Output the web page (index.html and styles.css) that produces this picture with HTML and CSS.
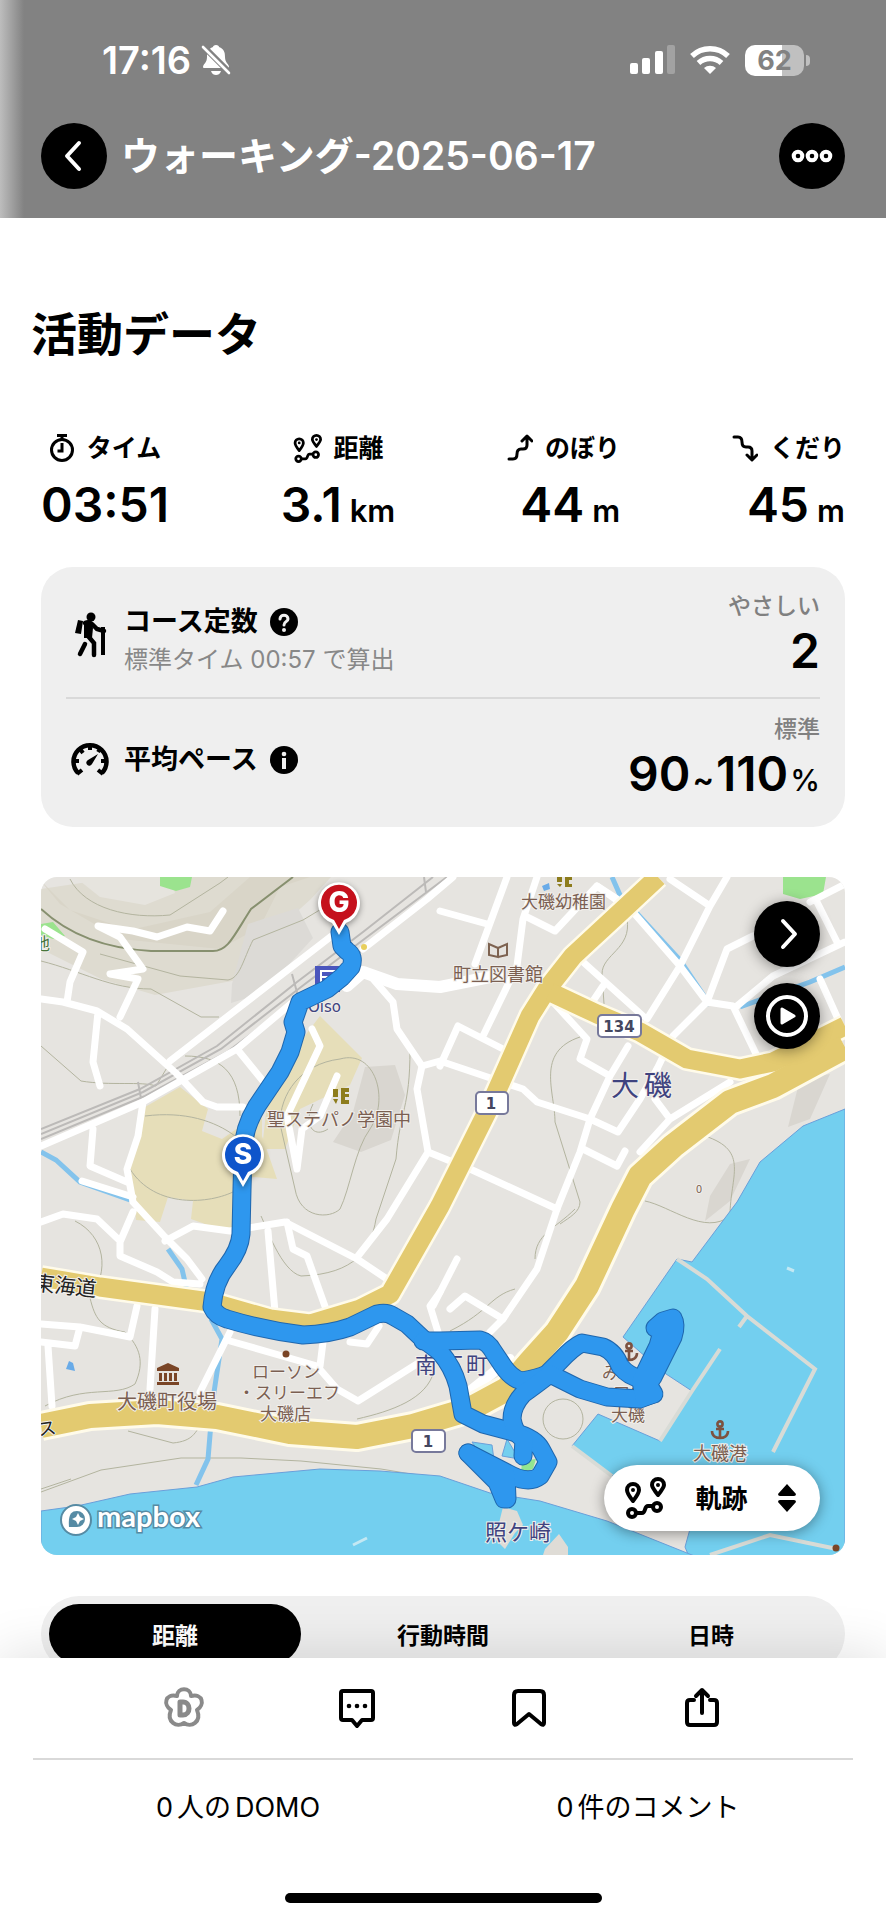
FILE: index.html
```html
<!DOCTYPE html>
<html lang="ja">
<head>
    <meta charset="UTF-8">
    <meta name="viewport" content="width=device-width, initial-scale=1.0">
    <title>ウォーキング-2025-06-17</title>
    <link rel="stylesheet" href="styles.css">
</head>
<body>

<!-- shared icons -->
<svg class="defs" aria-hidden="true">
    <symbol id="track" viewBox="0 0 42 42">
        <g fill="none" stroke="currentColor" stroke-width="4" stroke-linejoin="round">
            <path d="M9 24C5 19 3 16 3 13a6 6 0 0 1 12 0c0 3-2 6-6 11z"/>
            <path d="M34 18c-4-5-6-8-6-10a6 6 0 0 1 12 0c0 2-2 5-6 10z"/>
            <circle cx="8" cy="36" r="4"/>
            <circle cx="33" cy="30" r="4"/>
            <path d="M12 36h6c4 0 2-7 6-7h5"/>
        </g>
        <circle cx="9" cy="13" r="2"/>
        <circle cx="34" cy="8" r="2"/>
    </symbol>
    <symbol id="anchor" viewBox="0 0 20 20">
        <g fill="none" stroke="currentColor" stroke-width="2.6">
            <circle cx="10" cy="4" r="2.6"/>
            <path d="M10 7v11M6 9h8M2 11c0 5 4 7 8 7s8-2 8-7"/>
        </g>
    </symbol>
</svg>

<header class="header">
    <div class="status">
        <span class="clock">17:16</span>
        <svg width="30" height="32" viewBox="0 0 30 32" fill="#fff">
            <path d="M15 1c2 0 3 1 3 2 5 2 6 5 6 10 0 6 4 7 4 10 0 1-1 1-2 1H4c-1 0-2 0-2-1 0-3 4-4 4-10 0-5 1-8 6-10 0-1 1-2 3-2z"/>
            <path d="M10 27h10c-1 3-3 4-5 4s-4-1-5-4z"/>
            <path d="M1 1l29 29" stroke="#828282" stroke-width="6"/>
            <path d="M2 3l26 26" stroke="#fff" stroke-width="2.6" stroke-linecap="round"/>
        </svg>
        <svg class="signal" width="46" height="30" viewBox="0 0 46 30" fill="#fff">
            <rect x="1" y="18" width="8" height="11" rx="2"/>
            <rect x="13" y="13" width="8" height="16" rx="2"/>
            <rect x="26" y="6" width="8" height="23" rx="2"/>
            <rect x="38" y="0" width="8" height="29" rx="2" fill="#a2a2a2"/>
        </svg>
        <svg class="wifi" width="42" height="30" viewBox="0 0 42 30" fill="none" stroke="#fff" stroke-width="5.4">
            <path d="M3 11a26 26 0 0 1 36 0M9.500 18a17 17 0 0 1 23 0"/>
            <path d="M21 29l-6-6a9 9 0 0 1 12 0z" fill="#fff" stroke="none"/>
        </svg>
        <span class="battery">62</span>
    </div>
    <div class="titlebar">
        <button class="round" aria-label="戻る">
            <svg width="32" height="32" viewBox="0 0 32 32" fill="none" stroke="#fff" stroke-width="4" stroke-linecap="round" stroke-linejoin="round"><path d="M21 3L9 16l12 13"/></svg>
        </button>
        <h1>ウォーキング-2025-06-17</h1>
        <button class="round" aria-label="メニュー">
            <svg width="42" height="14" viewBox="0 0 42 14" fill="none" stroke="#fff" stroke-width="4"><circle cx="7" cy="7" r="4.300"/><circle cx="21" cy="7" r="4.300"/><circle cx="35" cy="7" r="4.300"/></svg>
        </button>
    </div>
</header>

<main>
    <h2>活動データ</h2>

    <div class="stats">
        <div class="stat">
            <div class="stat-label">
                <svg width="26" height="30" viewBox="0 0 26 30" fill="none" stroke="#000" stroke-width="3"><circle cx="13" cy="17" r="10.500"/><path d="M8 2.500h10M13 2v5M13 10v8H8.500"/></svg>
                タイム
            </div>
            <div class="value">03:51</div>
        </div>
        <div class="stat">
            <div class="stat-label">
                <svg width="29" height="29"><use href="#track"/></svg>
                距離
            </div>
            <div class="value">3.1<small>km</small></div>
        </div>
        <div class="stat right">
            <div class="stat-label">
                <svg width="26" height="28" viewBox="0 0 26 28" fill="none" stroke="#000" stroke-width="3" stroke-linecap="round" stroke-linejoin="round"><path d="M2 25h4q4 0 4-5t4-5h2q4 0 4-4V3M15 7l5-5 5 5"/></svg>
                のぼり
            </div>
            <div class="value">44<small>m</small></div>
        </div>
        <div class="stat right">
            <div class="stat-label">
                <svg width="26" height="28" viewBox="0 0 26 28" fill="none" stroke="#000" stroke-width="3" stroke-linecap="round" stroke-linejoin="round"><path d="M2 3h4q4 0 4 5t4 5h2q4 0 4 4v8M15 21l5 5 5-5"/></svg>
                くだり
            </div>
            <div class="value">45<small>m</small></div>
        </div>
    </div>

    <section class="card">
        <div class="row course">
            <svg width="48" height="48" viewBox="0 0 48 48">
                <circle cx="25" cy="7" r="4.500"/>
                <path d="M12 10l5 1-2 13-6-1z"/>
                <path d="M19 13q4-2 7 1l5 5 7 2" fill="none" stroke="#000" stroke-width="4.500" stroke-linecap="round"/>
                <path d="M18 13h7l2 5-1 10h-8z"/>
                <path d="M22 26l6 7v12M19 34l-5 10" fill="none" stroke="#000" stroke-width="4.500" stroke-linecap="round"/>
                <path d="M37 17v28" stroke="#000" stroke-width="4"/>
            </svg>
            <div class="row-text">
                <h3>コース定数
                    <svg width="28" height="28" viewBox="0 0 28 28"><circle cx="14" cy="14" r="14"/><path d="M10 11c0-5 8-5 8 0 0 3-4 2-4 6" fill="none" stroke="#efefef" stroke-width="3" stroke-linecap="round"/><circle cx="14" cy="22" r="2" fill="#efefef"/></svg>
                </h3>
                <p>標準タイム 00:57 で算出</p>
            </div>
            <div class="result">
                <span class="grade">やさしい</span>
                <span class="value">2</span>
            </div>
        </div>
        <div class="row pace">
            <svg width="48" height="48" viewBox="0 0 48 48">
                <path d="M12 37A16.500 16.500 0 1 1 36 37" fill="none" stroke="#000" stroke-width="4.500"/>
                <path d="M8 25h5M35 25h5M24 8v6M14 13l3 4M34 13l-2 3M11 38l5-4M37 38l-5-4" stroke="#000" stroke-width="4"/>
                <path d="M32 18L22 24a3 3 0 1 0 4 4z"/>
            </svg>
            <div class="row-text">
                <h3>平均ペース
                    <svg width="28" height="28" viewBox="0 0 28 28"><circle cx="14" cy="14" r="14"/><circle cx="14" cy="8" r="2.300" fill="#efefef"/><path d="M12 12h4v11h-4z" fill="#efefef"/></svg>
                </h3>
            </div>
            <div class="result">
                <span class="grade">標準</span>
                <span class="value">90<span class="tilde">~</span>110<small>%</small></span>
            </div>
        </div>
    </section>

    <section class="map">
        <svg class="map-view" viewBox="41 878 804 678" preserveAspectRatio="xMidYMid slice">
            <rect class="land" x="41" y="878" width="804" height="678"/>

            <!-- ground -->
            <path fill="#dedbd0" d="M41 890l80-12h210l-20 22-50 45-18 35-88 16-54-16-60-30z"/>
            <path fill="#d9d5c8" d="M60 905l60 35 100 10 40-22 20-40 30-10h-60l-40 35-80 18-60-20-30-30z"/>
            <path fill="#e6e4de" d="M75 878h95l5 16-30 12-45-8z"/>
            <path fill="#dcdad6" d="M232 985l16-60 50-16 15 30-50 55-32 10z"/>
            <path fill="#d9d6d0" d="M365 1068l30-2 10 30-14 45-30 12-28-10 20-30zM800 1080l30-5-20 45-22 8zM730 1165l20-5-20 42-25 20 5-25z"/>
            <path class="school" d="M145 1108l35-20 28 22-6 22 20 8 40-28v25l15 43-24-2-20 12v45l-42-15 2-18-25-4-8 25-24-2-6-55z"/>
            <path class="school" d="M320 1017l42 42-12 27-50 24-15 40h-23l5-45 20-45z"/>
            <path class="park" d="M160 878h32l-2 10-14 4-16-5zM783 878h43l-3 17-23 5-17-5zM41 925l12-2 12 14-12 3-12-4z"/>

            <!-- contour lines -->
            <g class="contour">
                <path d="M41 910c30 28 70 40 110 42h62c15 0 20-14 38-42l42-32" stroke="#87906f" stroke-width="2"/>
                <path d="M70 880c15 30 60 40 100 36l50-32 8-6M41 962c40 10 70 28 110 28l50 28h18M100 955l80 22 48 4c12-2 15-20 25-40l50-20 20-12M41 1047l40 35c30 5 60 0 75 5l15-25M185 1057c35 0 55 15 55 60"/>
                <path d="M145 1117c40-5 70 5 90 20M130 1170c25 40 80 35 105 22M340 1060c35-10 50 40 30 70-15 20-20 60-30 80-10 10-40 10-45-20l-15-65c0-30 20-60 60-65zM313 1105c-10 20 0 35 15 25"/>
                <path d="M410 1050c0 60-10 60-14 110l-20 60c-5 30-20 55-75 57-20-5-35-50-40-60M75 1222c30 15 35 50 15 77 5 20 10 30 35 34 15 15 20 30 10 52-20 14-50 0-90 22M128 1432l45 12c20-2 22-10 30-22"/>
                <path d="M627 920c5 30-25 35-25 55l2 30M580 1038c-45 15-25 55-25 85l25 80c0 10-10 15-20 22M705 1137c45 15 25 40 25 80-25 20-60-10-85-15M357 1420c35-8 70-20 77-48M450 1332c40-20 40-35 65-42M535 1260c0-25 20-30 40-50"/>
                <path d="M41 1493l60-22 80-12h60l60 3 80 8 60 10M41 1490l30-10"/>
                <circle cx="563" cy="1420" r="20"/>
            </g>

            <!-- railway -->
            <g class="rail">
                <path d="M41 1130l99-40 77-43 80-64 66-50 70-55"/>
                <path d="M41 1135l102-42 78-43 80-62 66-50 80-60"/>
                <path d="M41 1140l104-43 82-44 80-60 66-50 80-65"/>
                <path d="M138 1083l4 22M292 975l6 22M424 878l2 15"/>
            </g>

            <!-- sea -->
            <path class="sea" d="M845 1110l-42 17-43 36-23 40-45 60-15-3-54 78 40 35 29 19-32 50-62-27-26 32 35 26 83 57-5 18 5 12h155z"/>
            <path class="sea" d="M41 1512l36-5 53-12 67-7 36-10 87-8 60 2 60 5 50 17 50 8 67 20 95 38H41z"/>
            <path class="sea" d="M472 1443l20 3 2 15-14-6zM507 1440l12 20-17-3z"/>
            <path class="pier" d="M677 1260l30 20 40 37 68 53-42 83M720 1350l-28 42-32 50M747 1317l-8 11M572 1447l40 30M710 1556l60-20 67 14"/>
            <path class="reef" d="M503 1508l14 4 6 14-8 8-10 16-10-10zM545 1550l14-15 9 13v8h-25z"/>
            <path class="wake" d="M353 1546l14-7M787 1269l7 3"/>

            <!-- streams -->
            <path class="stream" d="M41 1153l15 8 24 22 50 18M168 1250l14 20 5 22M211 1320l11 20-9 60-5 60-12 26M612 878l8 18 60 65 30 45M740 1008l70-25 35-15"/>

            <!-- streets -->
            <g class="street">
                <path d="M170 1062l168-130M41 1147l102-44 94-53 56-47M363 950l64-50 26-22"/>
                <path d="M41 1000l22 3 34 9 30 18 50 45 26 28 14 5h26M98 1013l-5 50 7 24M45 930l38 23-13 30-3 20"/>
                <path d="M223 912l-13 20-23-4-30 10-24-6-35-5 22 11 23 32-33 5 28 5-18 38"/>
                <path d="M143 1103l-5 34-11 33 6 33 32 35 22 22 15 20M133 1213l-13 30v14l37 16 16 10 27 2M41 1223l22-8 34 5 21 20"/>
                <path d="M165 1242l28-15 37 5 55-9 72 37 33 22M93 1130l-3 37 37 16M82 1182l51 16"/>
                <path d="M312 1030l8 17-33 70 10 53 5-40 18-13 17-40M237 1050l26 32"/>
                <path d="M367 973l26 30 4 27 25 37-5 23 11 63-41 67-29 37M428 1153l42 17 87 40"/>
                <path d="M422 1067l18-5 83 28 14 13 53 17 28 13 22-33 17-30"/>
                <path d="M507 878l-32 87M440 912l47 13M537 878l-14 42-6 47-34 70M527 918l28 14 42-45 20 13M440 1067l18-40 45 23"/>
                <path d="M670 880l40 27M727 878l-17 29-30 60-33 53M597 887l36 26 47 54 27 36 26 4 24 50M707 1003l20-53 26-13M707 1003l-34 34-16 33"/>
                <path d="M845 885l-35 18M817 903l20 40M737 1007l36-30 72-34M820 980l18 40M582 962l61 55M603 987l-10 15"/>
                <path d="M553 1003l34 37-7 20 30 17 18-30M610 1077l-20 43-10 33-23 57-20 60-34 50-13 13M583 1150l34 17 8-15M640 1153l30-33 60-37M670 1120l-15-20"/>
                <path d="M450 1310l15-13 38 23M457 1260l-24 47M268 1232l7 81M287 1223l6 27 14 7 20 56"/>
                <path d="M137 1307l-7 31-50-10-39-3M41 1343l34 4 5-19M48 1347l4 60M155 1310l-5 80M230 1333l-30 60M230 1342l87 25 20 23 21 12 62-39M323 1343l-3 24M350 1343l17 2 12-18M438 1333l-8-26 10-14"/>
                <path d="M460 1400l50-40" stroke-width="10"/>
                <path d="M347 987l16-14 34 12 43 3 60-12" stroke-width="12"/>
            </g>

            <!-- national roads -->
            <g class="road-case">
                <path d="M658 878l-31 29-54 50-26 33-17 27-40 90-50 100-50 88-30 15-50 15-40-5-60-17-110-15-59-10"/>
                <path d="M550 993l47 22 43 18 47 27 53 10 33-7 72-36"/>
                <path d="M845 1048l-72 39-43 16-57 44-33 30-17 33-36 77-30 46-27 30-23 27-37 20-57 17-56 11-67-5-73-15-60-5-67 4-49 10" stroke-width="30"/>
            </g>
            <g class="road">
                <path d="M658 878l-31 29-54 50-26 33-17 27-40 90-50 100-50 88-30 15-50 15-40-5-60-17-110-15-59-10"/>
                <path d="M550 993l47 22 43 18 47 27 53 10 33-7 72-36"/>
                <path d="M845 1048l-72 39-43 16-57 44-33 30-17 33-36 77-30 46-27 30-23 27-37 20-57 17-56 11-67-5-73-15-60-5-67 4-49 10" stroke-width="24"/>
            </g>

            <!-- place names and landmarks -->
            <g class="poi">
                <text x="521" y="909" font-size="17">大磯幼稚園</text>
                <text x="453" y="982" font-size="18">町立図書館</text>
                <text x="267" y="1127" font-size="18">聖ステパノ学園中</text>
                <text x="117" y="1410" font-size="20">大磯町役場</text>
                <text x="252" y="1379" font-size="17">ローソン</text>
                <text x="238" y="1400" font-size="17">・スリーエフ</text>
                <text x="260" y="1421" font-size="17">大磯店</text>
                <text x="602" y="1380" font-size="17">みな</text>
                <text x="613" y="1401" font-size="17">口店</text>
                <text x="611" y="1422" font-size="17">大磯</text>
                <text x="693" y="1461" font-size="18">大磯港</text>
                <text x="696" y="1194" font-size="11">0</text>
            </g>
            <g class="place">
                <text x="611" y="1097" font-size="28">大</text>
                <text x="644" y="1097" font-size="28">磯</text>
                <text x="415" y="1374" font-size="22">南</text>
                <text x="441" y="1374" font-size="22">下</text>
                <text x="466" y="1374" font-size="22">町</text>
                <text x="485" y="1541" font-size="22">照ケ崎</text>
                <text x="308" y="1013" font-size="15" font-family="DejaVu Sans, sans-serif">Oiso</text>
            </g>
            <g class="road-name">
                <text x="33" y="1291" font-size="21" transform="rotate(6 33 1291)">東海道</text>
                <text x="39" y="1437" font-size="18" transform="rotate(-8 39 1437)">ス</text>
                <text x="33" y="951" font-size="17" fill="#48753a">地</text>
            </g>
            <path fill="#4b56bd" d="M315 967h25v26h-25z"/>
            <path fill="none" stroke="#fff" stroke-width="2" d="M321 972h14v13h-14zM321 978h14M321 989h4M331 989h4"/>
            <g fill="#8d7c1c">
                <path d="M333 1090h5v8h-5zM333 1100h5l-2 5zM341 1089h8v4h-4v2h4v3h-4v3h4v4h-8zM557 878h5v5h-5zM557 885h5l-2 3zM565 878h7v3h-3v4h3v3h-7z"/>
            </g>
            <path fill="none" stroke="#7d6250" stroke-width="2" d="M498 958v-9l-9-4v11zM498 958l9-2v-11l-9 4"/>
            <path fill="#7a4526" d="M157 1369l11-5 11 5v3h-22zM159 1374h3v8h-3zM164 1374h3v8h-3zM169 1374h3v8h-3zM174 1374h3v8h-3zM157 1383h22v3h-22z"/>
            <circle cx="286" cy="1355" r="3.500" fill="#7a4526"/>
            <circle cx="836" cy="1549" r="3.500" fill="#7a4526"/>
            <path fill="#69abe8" d="M66 1370l3-8 4 2 2 8zM542 887l7-3 1 6-6 2z"/>
            <g color="#7d5240">
                <use href="#anchor" x="619" y="1343" width="20" height="20"/>
                <use href="#anchor" x="710" y="1421" width="20" height="20"/>
            </g>
            <circle cx="364" cy="948" r="3" fill="#e8cf5d"/>

            <!-- road numbers -->
            <g class="shield">
                <rect x="598" y="1016" width="43" height="22" rx="4"/>
                <text x="619" y="1033">134</text>
                <rect x="476" y="1093" width="32" height="22" rx="4"/>
                <text x="491" y="1110">1</text>
                <rect x="412" y="1431" width="33" height="22" rx="4"/>
                <text x="428" y="1448">1</text>
            </g>

            <!-- walked route: dark edge first, fill on top -->
            <path fill="#93e591" d="M522 1462l14-2-3 10-12 4z"/>
            <defs>
                <g id="route">
                    <path d="M340 933L342 947L347 952Q355 957 351 968L342 978L327 990L300 1003Q295 1018 293 1023L296 1033L290 1053L280 1073L257 1107Q243 1130 243 1153L242 1190L241 1235Q240 1250 227 1267Q214 1283 212 1308Q216 1317 227 1320Q263 1331 303 1336Q330 1335 350 1328L377 1315Q387 1313 393 1317L407 1325L423 1340L440 1353Q453 1368 458 1387L463 1415L483 1425L513 1433Q535 1439 541 1450L548 1463L540 1477Q528 1486 507 1474L468 1454"/>
                    <path d="M423 1342L440 1342L480 1341Q488 1343 493 1352L503 1367Q512 1380 522 1382Q540 1379 547 1375L560 1362Q573 1348 582 1344L603 1348Q615 1353 620 1367Q629 1378 642 1380"/>
                    <path d="M653 1395L640 1400L607 1398L580 1390L550 1375Q533 1388 523 1395Q512 1407 512 1420Q515 1436 524 1440L523 1457"/>
                    <path fill="#2e97ee" d="M655 1329L663 1322L673 1319Q677 1326 673 1338L653 1378L648 1385L654 1395L644 1398L641 1382L658 1347L663 1329z"/>
                    <path fill="#2e97ee" d="M468 1454L497 1483L504 1500H507L506 1476z"/>
                </g>
            </defs>
            <use class="route-edge" href="#route"/>
            <use class="route" href="#route"/>

            <!-- start and goal pins -->
            <g class="pin">
                <path d="M339 936l-7-12a21 21 0 1 1 14 0z" fill="#fff"/>
                <path d="M339 930l-5-9a18 18 0 1 1 10 0z" fill="#c5101c"/>
                <text x="339" y="913">G</text>
                <path d="M243 1188l-7-12a21 21 0 1 1 14 0z" fill="#fff"/>
                <path d="M243 1182l-5-9a18 18 0 1 1 10 0z" fill="#0e55cb"/>
                <text x="243" y="1165">S</text>
            </g>

            <!-- map provider -->
            <circle cx="76" cy="1521" r="15" fill="#fff" stroke="#568ba4" stroke-width="2"/>
            <path fill="#568ba4" d="M69 1528c-1-12 2-16 8-16a8 8 0 0 1 0 16z"/>
            <path fill="#fff" d="M78 1514l2 4 4 2-4 2-2 4-2-4-4-2 4-2z"/>
            <text class="mapbox" x="97" y="1528">mapbox</text>
        </svg>

        <div class="map-buttons">
            <button class="round" aria-label="地図を開く">
                <svg width="32" height="32" viewBox="0 0 32 32" fill="none" stroke="#fff" stroke-width="4" stroke-linecap="round" stroke-linejoin="round"><path d="M12 3l12 13-12 13"/></svg>
            </button>
            <button class="round" aria-label="再生">
                <svg width="44" height="44" viewBox="0 0 44 44" fill="none" stroke="#fff" stroke-width="4"><circle cx="22" cy="22" r="19"/><path d="M17 15v14l12-7z" fill="#fff" stroke-linejoin="round" stroke-width="3"/></svg>
            </button>
        </div>

        <label class="layer">
            <svg width="42" height="42"><use href="#track"/></svg>
            <select aria-label="表示">
                <option>軌跡</option>
            </select>
            <svg width="18" height="28" viewBox="0 0 18 28"><path d="M9 0l9 10q0 2-2 2H2q-2 0-2-2zM9 28l9-10q0-2-2-2H2q-2 0-2 2z"/></svg>
        </label>
    </section>

    <div class="tabs">
        <button class="active">距離</button>
        <button>行動時間</button>
        <button>日時</button>
    </div>
</main>

<footer>
    <div class="actions">
        <button aria-label="DOMO">
            <svg width="44" height="44" viewBox="0 0 44 44" fill="none" stroke="#8a8a8a" stroke-width="4" stroke-linejoin="round">
                <path d="M15 10c0-9 14-9 14 0 12-3 14 9 6 14 5 12-6 18-13 13-7 5-18-1-13-13-8-5-6-17 6-14z"/>
                <path d="M18 16h3c8 0 8 13 0 13h-3z" stroke-width="5"/>
            </svg>
        </button>
        <button aria-label="コメント">
            <svg width="44" height="44" viewBox="0 0 44 44" fill="none" stroke="#000" stroke-width="4" stroke-linejoin="round">
                <path d="M8 5h28q2 0 2 2v25q0 2-2 2H27l-5 6-5-6H8q-2 0-2-2V7q0-2 2-2z"/>
                <g fill="#000" stroke="none"><circle cx="14" cy="20" r="2.300"/><circle cx="22" cy="20" r="2.300"/><circle cx="30" cy="20" r="2.300"/></g>
            </svg>
        </button>
        <button aria-label="保存">
            <svg width="44" height="44" viewBox="0 0 44 44" fill="none" stroke="#000" stroke-width="4" stroke-linejoin="round"><path d="M11 5h22q4 0 4 4v28q0 3-3 1L22 28 10 38q-3 2-3-1V9q0-4 4-4z"/></svg>
        </button>
        <button aria-label="共有">
            <svg width="44" height="44" viewBox="0 0 44 44" fill="none" stroke="#000" stroke-width="4" stroke-linecap="round" stroke-linejoin="round"><path d="M14 14h-4q-3 0-3 3v19q0 3 3 3h24q3 0 3-3V17q0-3-3-3h-4M22 27V4M16 10l6-6 6 6"/></svg>
        </button>
    </div>
    <div class="counts">
        <a href="#"><span>0</span>人の<span>DOMO</span></a>
        <a href="#"><span>0</span>件のコメント</a>
    </div>
    <div class="home"></div>
</footer>

</body>
</html>
```

FILE: styles.css
```css
* {
    box-sizing: border-box;
}

body {
    display: flex;
    flex-direction: column;
    height: 100vh;
    margin: 0;
    background-color: #fff;
    color: #000;
    font-family: Inter, "Noto Sans CJK JP", sans-serif;
}

h1, h2, h3, p {
    margin: 0;
}

button {
    padding: 0;
    border: none;
    background: none;
    color: inherit;
    font-family: inherit;
    cursor: pointer;
}

svg {
    display: block;
    flex-shrink: 0;
}

.defs {
    position: absolute;
    width: 0;
    height: 0;
}

/* Header */
.header {
    padding: 38px 41px 29px;
    background: linear-gradient(to right, #bdbdbd, #828282 24px);
    color: #fff;
}

.status {
    display: flex;
    align-items: center;
    height: 44px;
    margin-bottom: 41px;
    padding: 0 34px 0 61px;
}

.clock {
    margin-right: 10px;
    font-size: 38px;
    font-weight: 600;
    line-height: 44px;
}

.signal {
    margin-left: auto;
}

.wifi {
    margin: 0 14px;
}

.battery {
    position: relative;
    width: 59px;
    margin-right: 7px;
    border-radius: 10px;
    background: linear-gradient(to right, #fff 62%, #c0c0c0 62%);
    color: #828282;
    font-size: 27px;
    font-weight: 700;
    line-height: 31px;
    text-align: center;
}

.battery::after {
    content: "";
    position: absolute;
    top: 10px;
    right: -6px;
    width: 4px;
    height: 11px;
    border-radius: 0 4px 4px 0;
    background-color: #c0c0c0;
}

.titlebar {
    display: flex;
    align-items: center;
    gap: 14px;
}

.titlebar h1 {
    flex: 1;
    font-size: 39px;
    font-weight: 600;
    line-height: 48px;
    white-space: nowrap;
}

.round {
    display: flex;
    align-items: center;
    justify-content: center;
    flex-shrink: 0;
    width: 66px;
    height: 66px;
    border-radius: 50%;
    background-color: #000;
}

/* Activity data */
main {
    flex: 1;
    min-height: 0;
    padding: 86px 41px 0;
    overflow-y: auto;
    scrollbar-width: none;
}

h2 {
    margin: 0 0 66px -10px;
    font-size: 46px;
    font-weight: 700;
    line-height: 60px;
}

.stats {
    display: flex;
    justify-content: space-between;
    margin-bottom: 28px;
}

.stat {
    display: flex;
    flex-direction: column;
    align-items: center;
}

.right {
    align-items: flex-end;
}

.stat-label {
    display: flex;
    align-items: center;
    gap: 12px;
    font-size: 25px;
    font-weight: 600;
    line-height: 36px;
    margin-bottom: 11px;
}

.value {
    font-size: 48px;
    font-weight: 600;
    line-height: 56px;
}

.value small {
    margin-left: 8px;
    font-size: 31px;
    font-weight: 600;
}

.card {
    margin-bottom: 50px;
    padding: 0 25px;
    border-radius: 32px;
    background-color: #efefef;
}

.row {
    display: flex;
    align-items: center;
    gap: 10px;
    height: 130px;
}

.course {
    padding-top: 4px;
}

.pace {
    padding-bottom: 6px;
    border-top: 2px solid #d9d9d9;
}

.row-text {
    flex: 1;
}

.course .row-text {
    padding-top: 12px;
}

.row h3 {
    display: flex;
    align-items: center;
    gap: 12px;
    font-size: 27px;
    font-weight: 600;
    line-height: 40px;
}

.row p {
    color: #888;
    font-size: 24px;
    line-height: 36px;
}

.result {
    display: flex;
    flex-direction: column;
    align-items: flex-end;
}

.grade {
    color: #808080;
    font-size: 23px;
    font-weight: 500;
    line-height: 34px;
}

.tilde {
    margin: 0 2px;
    font-size: 32px;
}

.result small {
    margin-left: 2px;
    font-size: 30px;
    font-weight: 500;
}

/* Map */
.map {
    position: relative;
    margin-bottom: 41px;
    border-radius: 16px;
    overflow: hidden;
}

.map-view {
    width: 100%;
    font-family: "Noto Sans CJK JP", sans-serif;
}

.land { fill: #e6e4e0; }
.school { fill: #e6deb9; }
.park { fill: #9be38e; }
.sea { fill: #73cfef; stroke: #6a9fda; stroke-width: 1; }
.reef { fill: #dfdcd6; }

.contour {
    fill: none;
    stroke: #b3b49f;
    stroke-width: 1;
}

.rail {
    fill: none;
    stroke: #bcbab8;
    stroke-width: 2;
}

.pier {
    fill: none;
    stroke: #d8dbd6;
    stroke-width: 4;
}

.wake {
    fill: none;
    stroke: #c3e8f3;
    stroke-width: 3;
}

.stream {
    fill: none;
    stroke: #83c3ec;
    stroke-width: 5;
}

.street {
    fill: none;
    stroke: #fff;
    stroke-width: 7;
    stroke-linecap: round;
    stroke-linejoin: round;
}

.road-case {
    fill: none;
    stroke: #fffbea;
    stroke-width: 24;
    stroke-linejoin: round;
}

.road {
    fill: none;
    stroke: #e3ca70;
    stroke-width: 19;
    stroke-linejoin: round;
}

.poi, .place, .road-name {
    paint-order: stroke;
    stroke: #f1efec;
    stroke-width: 2;
}

.poi { fill: #7b5f52; }
.place { fill: #3f437f; }
.road-name { fill: #222; }

.shield rect {
    fill: #fff;
    stroke: #77799b;
    stroke-width: 2;
}

.shield text {
    fill: #44475f;
    font-family: "DejaVu Sans", sans-serif;
    font-size: 15px;
    font-weight: 700;
    text-anchor: middle;
}

.route-edge, .route {
    fill: none;
    stroke-linecap: round;
    stroke-linejoin: round;
}

.route-edge {
    stroke: #1f66ad;
    stroke-width: 19;
}

.route {
    stroke: #2e97ee;
    stroke-width: 17;
}

.pin {
    filter: drop-shadow(0 2px 3px rgba(0, 0, 0, 0.4));
}

.pin text {
    fill: #fff;
    font-family: Inter, sans-serif;
    font-size: 28px;
    font-weight: 800;
    text-anchor: middle;
}

.mapbox {
    fill: #fff;
    stroke: #568ba4;
    stroke-width: 3;
    paint-order: stroke;
    font-family: Lato, sans-serif;
    font-size: 29px;
    font-weight: 700;
}

.map-buttons {
    position: absolute;
    top: 24px;
    right: 25px;
    display: flex;
    flex-direction: column;
    gap: 16px;
}

.map-buttons .round, .layer {
    box-shadow: 0 2px 14px rgba(0, 0, 0, 0.4);
}

.layer {
    position: absolute;
    right: 25px;
    bottom: 24px;
    display: flex;
    align-items: center;
    justify-content: space-between;
    width: 216px;
    height: 66px;
    padding: 0 24px 0 20px;
    border-radius: 33px;
    background-color: #fff;
}

.layer select {
    appearance: none;
    padding: 0;
    border: none;
    background: none;
    color: #000;
    font-family: inherit;
    font-size: 26px;
    font-weight: 700;
}

/* Graph tabs */
.tabs {
    display: grid;
    grid-template-columns: repeat(3, 1fr);
    gap: 16px;
    padding: 8px;
    border-radius: 38px;
    background-color: #efefef;
}

.tabs button {
    height: 60px;
    border-radius: 30px;
    font-size: 23px;
    font-weight: 600;
}

.tabs .active {
    background-color: #000;
    color: #fff;
}

/* Bottom bar */
footer {
    position: relative;
    padding: 0 33px 17px;
    background-color: #fff;
    box-shadow: 0 -4px 50px rgba(0, 0, 0, 0.12);
}

.actions {
    display: grid;
    grid-template-columns: repeat(4, 1fr);
    padding: 0 65px;
    border-bottom: 2px solid #d9d9d9;
}

.actions button {
    display: flex;
    align-items: center;
    justify-content: center;
    height: 100px;
}

.counts {
    display: grid;
    grid-template-columns: 1fr 1fr;
    padding: 28px 0 66px;
}

.counts a {
    display: flex;
    justify-content: center;
    gap: 4px;
    color: #000;
    font-size: 27px;
    line-height: 39px;
    text-decoration: none;
}

.home {
    width: 317px;
    height: 10px;
    margin: 0 auto;
    border-radius: 5px;
    background-color: #000;
}
```
